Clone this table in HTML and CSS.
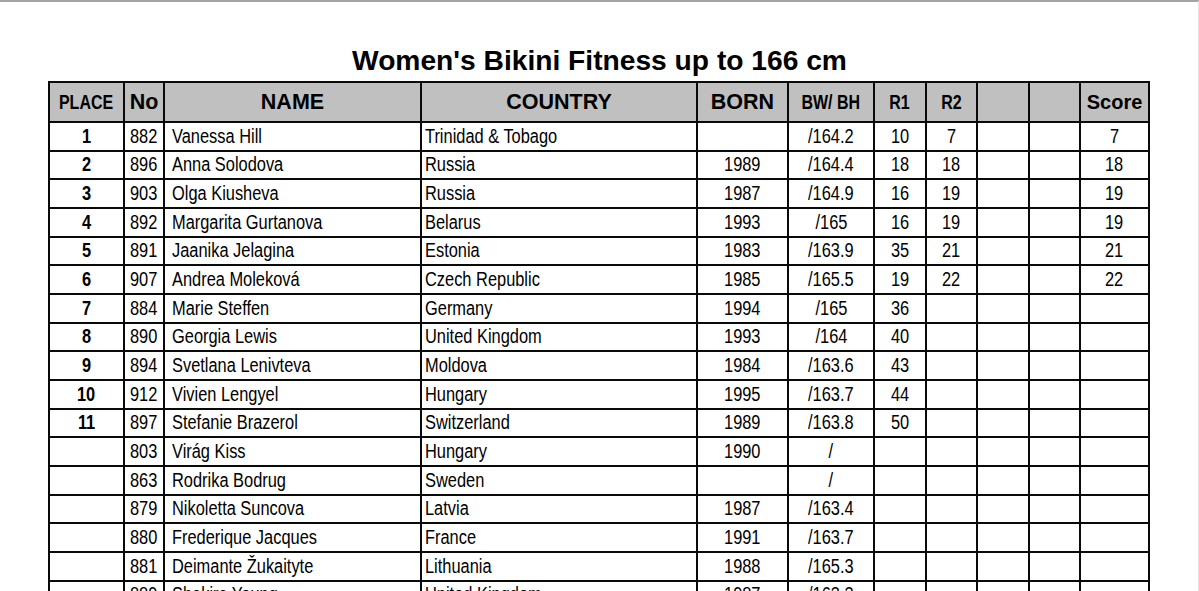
FILE: index.html
```html
<!DOCTYPE html>
<html>
<head>
<meta charset="utf-8">
<title>Women's Bikini Fitness up to 166 cm</title>
<link rel="stylesheet" href="styles.css">
</head>
<body>
<div class="page">
  <h1 class="title">Women's Bikini Fitness up to 166 cm</h1>
  <table class="results">
    <colgroup>
      <col class="c-place"><col class="c-no"><col class="c-name"><col class="c-country"><col class="c-born"><col class="c-bw"><col class="c-r"><col class="c-r"><col class="c-r"><col class="c-r"><col class="c-score">
    </colgroup>
    <thead>
      <tr>
        <th class="h-narrow"><span class="n">PLACE</span></th>
        <th class="h-wide">No</th>
        <th class="h-wide">NAME</th>
        <th class="h-wide">COUNTRY</th>
        <th class="h-wide">BORN</th>
        <th class="h-narrow"><span class="n">BW/ BH</span></th>
        <th class="h-narrow"><span class="n">R1</span></th>
        <th class="h-narrow"><span class="n">R2</span></th>
        <th></th>
        <th></th>
        <th class="h-score">Score</th>
      </tr>
    </thead>
    <tbody>
      <tr><td class="place"><span class="n">1</span></td><td class="ctr"><span class="n">882</span></td><td class="txt"><span class="n">Vanessa Hill</span></td><td class="txt2"><span class="n">Trinidad &amp; Tobago</span></td><td class="ctr"></td><td class="ctr"><span class="n">/164.2</span></td><td class="ctr"><span class="n">10</span></td><td class="ctr"><span class="n">7</span></td><td></td><td></td><td class="ctr"><span class="n">7</span></td></tr>
      <tr><td class="place"><span class="n">2</span></td><td class="ctr"><span class="n">896</span></td><td class="txt"><span class="n">Anna Solodova</span></td><td class="txt2"><span class="n">Russia</span></td><td class="ctr"><span class="n">1989</span></td><td class="ctr"><span class="n">/164.4</span></td><td class="ctr"><span class="n">18</span></td><td class="ctr"><span class="n">18</span></td><td></td><td></td><td class="ctr"><span class="n">18</span></td></tr>
      <tr><td class="place"><span class="n">3</span></td><td class="ctr"><span class="n">903</span></td><td class="txt"><span class="n">Olga Kiusheva</span></td><td class="txt2"><span class="n">Russia</span></td><td class="ctr"><span class="n">1987</span></td><td class="ctr"><span class="n">/164.9</span></td><td class="ctr"><span class="n">16</span></td><td class="ctr"><span class="n">19</span></td><td></td><td></td><td class="ctr"><span class="n">19</span></td></tr>
      <tr><td class="place"><span class="n">4</span></td><td class="ctr"><span class="n">892</span></td><td class="txt"><span class="n">Margarita Gurtanova</span></td><td class="txt2"><span class="n">Belarus</span></td><td class="ctr"><span class="n">1993</span></td><td class="ctr"><span class="n">/165</span></td><td class="ctr"><span class="n">16</span></td><td class="ctr"><span class="n">19</span></td><td></td><td></td><td class="ctr"><span class="n">19</span></td></tr>
      <tr><td class="place"><span class="n">5</span></td><td class="ctr"><span class="n">891</span></td><td class="txt"><span class="n">Jaanika Jelagina</span></td><td class="txt2"><span class="n">Estonia</span></td><td class="ctr"><span class="n">1983</span></td><td class="ctr"><span class="n">/163.9</span></td><td class="ctr"><span class="n">35</span></td><td class="ctr"><span class="n">21</span></td><td></td><td></td><td class="ctr"><span class="n">21</span></td></tr>
      <tr><td class="place"><span class="n">6</span></td><td class="ctr"><span class="n">907</span></td><td class="txt"><span class="n">Andrea Moleková</span></td><td class="txt2"><span class="n">Czech Republic</span></td><td class="ctr"><span class="n">1985</span></td><td class="ctr"><span class="n">/165.5</span></td><td class="ctr"><span class="n">19</span></td><td class="ctr"><span class="n">22</span></td><td></td><td></td><td class="ctr"><span class="n">22</span></td></tr>
      <tr><td class="place"><span class="n">7</span></td><td class="ctr"><span class="n">884</span></td><td class="txt"><span class="n">Marie Steffen</span></td><td class="txt2"><span class="n">Germany</span></td><td class="ctr"><span class="n">1994</span></td><td class="ctr"><span class="n">/165</span></td><td class="ctr"><span class="n">36</span></td><td></td><td></td><td></td><td></td></tr>
      <tr><td class="place"><span class="n">8</span></td><td class="ctr"><span class="n">890</span></td><td class="txt"><span class="n">Georgia Lewis</span></td><td class="txt2"><span class="n">United Kingdom</span></td><td class="ctr"><span class="n">1993</span></td><td class="ctr"><span class="n">/164</span></td><td class="ctr"><span class="n">40</span></td><td></td><td></td><td></td><td></td></tr>
      <tr><td class="place"><span class="n">9</span></td><td class="ctr"><span class="n">894</span></td><td class="txt"><span class="n">Svetlana Lenivteva</span></td><td class="txt2"><span class="n">Moldova</span></td><td class="ctr"><span class="n">1984</span></td><td class="ctr"><span class="n">/163.6</span></td><td class="ctr"><span class="n">43</span></td><td></td><td></td><td></td><td></td></tr>
      <tr><td class="place"><span class="n">10</span></td><td class="ctr"><span class="n">912</span></td><td class="txt"><span class="n">Vivien Lengyel</span></td><td class="txt2"><span class="n">Hungary</span></td><td class="ctr"><span class="n">1995</span></td><td class="ctr"><span class="n">/163.7</span></td><td class="ctr"><span class="n">44</span></td><td></td><td></td><td></td><td></td></tr>
      <tr><td class="place"><span class="n">11</span></td><td class="ctr"><span class="n">897</span></td><td class="txt"><span class="n">Stefanie Brazerol</span></td><td class="txt2"><span class="n">Switzerland</span></td><td class="ctr"><span class="n">1989</span></td><td class="ctr"><span class="n">/163.8</span></td><td class="ctr"><span class="n">50</span></td><td></td><td></td><td></td><td></td></tr>
      <tr><td class="place"></td><td class="ctr"><span class="n">803</span></td><td class="txt"><span class="n">Virág Kiss</span></td><td class="txt2"><span class="n">Hungary</span></td><td class="ctr"><span class="n">1990</span></td><td class="ctr"><span class="n">/</span></td><td></td><td></td><td></td><td></td><td></td></tr>
      <tr><td class="place"></td><td class="ctr"><span class="n">863</span></td><td class="txt"><span class="n">Rodrika Bodrug</span></td><td class="txt2"><span class="n">Sweden</span></td><td class="ctr"></td><td class="ctr"><span class="n">/</span></td><td></td><td></td><td></td><td></td><td></td></tr>
      <tr><td class="place"></td><td class="ctr"><span class="n">879</span></td><td class="txt"><span class="n">Nikoletta Suncova</span></td><td class="txt2"><span class="n">Latvia</span></td><td class="ctr"><span class="n">1987</span></td><td class="ctr"><span class="n">/163.4</span></td><td></td><td></td><td></td><td></td><td></td></tr>
      <tr><td class="place"></td><td class="ctr"><span class="n">880</span></td><td class="txt"><span class="n">Frederique Jacques</span></td><td class="txt2"><span class="n">France</span></td><td class="ctr"><span class="n">1991</span></td><td class="ctr"><span class="n">/163.7</span></td><td></td><td></td><td></td><td></td><td></td></tr>
      <tr><td class="place"></td><td class="ctr"><span class="n">881</span></td><td class="txt"><span class="n">Deimante Žukaityte</span></td><td class="txt2"><span class="n">Lithuania</span></td><td class="ctr"><span class="n">1988</span></td><td class="ctr"><span class="n">/165.3</span></td><td></td><td></td><td></td><td></td><td></td></tr>
      <tr><td class="place"></td><td class="ctr"><span class="n">889</span></td><td class="txt"><span class="n">Shakira Young</span></td><td class="txt2"><span class="n">United Kingdom</span></td><td class="ctr"><span class="n">1987</span></td><td class="ctr"><span class="n">/163.3</span></td><td></td><td></td><td></td><td></td><td></td></tr>
    </tbody>
  </table>
</div>
</body>
</html>
```

FILE: styles.css
```css
html, body {
  margin: 0;
  padding: 0;
  background: #ffffff;
}

.page {
  box-sizing: border-box;
  width: 1199px;
  height: 591px;
  overflow: hidden;
  border-top: 2px solid #a4a4a4;
  border-right: 1px solid #e2e2e2;
  font-family: "Liberation Sans", Arial, sans-serif;
  color: #000;
}

.title {
  margin: 41px 0 4px 0;
  font-family: "Liberation Sans", Arial, sans-serif;
  font-size: 28.2px;
  line-height: 34px;
  font-weight: bold;
  text-align: center;
  padding-left: 1px;
}

.results {
  margin-left: 48px;
  border-collapse: collapse;
  table-layout: fixed;
  width: 1102px;
}

.c-place { width: 75px; }
.c-no { width: 40px; }
.c-name { width: 257px; }
.c-country { width: 276px; }
.c-born { width: 91px; }
.c-bw { width: 86px; }
.c-r { width: 51.5px; }
.c-score { width: 69px; }

.results th,
.results td {
  border: 2px solid #0a0a0a;
  padding: 0;
  white-space: nowrap;
  overflow: hidden;
}

/* condensed (Arial Narrow look) text */
.n {
  display: inline-block;
  transform: scaleX(0.82);
  transform-origin: center center;
}

.results td.txt .n,
.results td.txt2 .n {
  transform-origin: left center;
}

.results thead tr {
  height: 40px;
}

.results th {
  background: #c0c0c0;
  font-weight: bold;
  text-align: center;
  vertical-align: middle;
  line-height: 22px;
}

.results th.h-narrow {
  font-size: 19.5px;
}

.results th.h-wide {
  font-size: 21.5px;
}

.results th.h-score {
  font-size: 20px;
}

.results tbody tr {
  height: 28.67px;
}

.results td {
  font-size: 20px;
  line-height: 22px;
  vertical-align: middle;
  padding-bottom: 1px;
}

.results td.place {
  text-align: center;
  font-weight: bold;
}

.results td.ctr {
  text-align: center;
}

.results td.txt {
  text-align: left;
  padding-left: 7px;
}

.results td.txt2 {
  text-align: left;
  padding-left: 3px;
}
```
